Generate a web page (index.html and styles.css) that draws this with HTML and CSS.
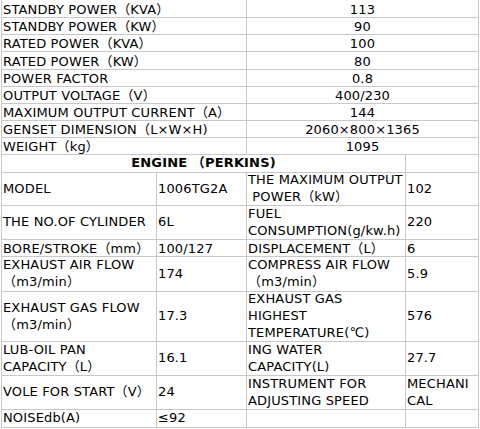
FILE: index.html
```html
<!DOCTYPE html>
<html>
<head>
<meta charset="utf-8">
<link rel="stylesheet" href="styles.css">
</head>
<body>
<div class="sheet">
  <div class="c lbl lo">STANDBY POWER（KVA）</div><div class="c val lo">113</div>
  <div class="c lbl lo">STANDBY POWER（KW）</div><div class="c val lo">90</div>
  <div class="c lbl lo">RATED POWER（KVA）</div><div class="c val lo">100</div>
  <div class="c lbl lo">RATED POWER（KW）</div><div class="c val lo">80</div>
  <div class="c lbl lo">POWER FACTOR</div><div class="c val lo">0.8</div>
  <div class="c lbl lo">OUTPUT VOLTAGE（V）</div><div class="c val lo">400/230</div>
  <div class="c lbl lo">MAXIMUM OUTPUT CURRENT（A）</div><div class="c val lo">144</div>
  <div class="c lbl lo">GENSET DIMENSION（L×W×H)</div><div class="c val lo">2060×800×1365</div>
  <div class="c lbl lo">WEIGHT（kg）</div><div class="c val lo">1095</div>

  <div class="c head">ENGINE （PERKINS)</div><div class="c"></div>

  <div class="c">MODEL</div><div class="c">1006TG2A</div><div class="c">THE MAXIMUM OUTPUT<br>&nbsp;POWER（kW）</div><div class="c">102</div>
  <div class="c">THE NO.OF CYLINDER</div><div class="c">6L</div><div class="c">FUEL<br>CONSUMPTION(g/kw.h)</div><div class="c">220</div>
  <div class="c lo">BORE/STROKE（mm）</div><div class="c lo">100/127</div><div class="c lo">DISPLACEMENT（L）</div><div class="c lo">6</div>
  <div class="c">EXHAUST AIR FLOW<br>（m3/min）</div><div class="c">174</div><div class="c">COMPRESS AIR FLOW<br>（m3/min）</div><div class="c">5.9</div>
  <div class="c">EXHAUST GAS FLOW<br>（m3/min）</div><div class="c">17.3</div><div class="c">EXHAUST GAS<br>HIGHEST<br>TEMPERATURE(℃)</div><div class="c">576</div>
  <div class="c">LUB-OIL PAN<br>CAPACITY（L）</div><div class="c">16.1</div><div class="c">ING WATER<br>CAPACITY(L)</div><div class="c">27.7</div>
  <div class="c">VOLE FOR START（V）</div><div class="c">24</div><div class="c">INSTRUMENT FOR<br>ADJUSTING SPEED</div><div class="c">MECHANI<br>CAL</div>
  <div class="c">NOISEdb(A)</div><div class="c">≤92</div><div class="c"></div><div class="c"></div>
</div>
</body>
</html>
```
FILE: styles.css
```css
html, body {
  margin: 0;
  padding: 0;
  background: #fff;
}
body {
  font-family: "DejaVu Sans", "Noto Sans CJK SC", sans-serif;
  font-size: 13px;
  letter-spacing: 0.15px;
  color: #000;
}
.sheet {
  margin-left: 1px;
  width: 476px;
  display: grid;
  grid-template-columns: 154px 89px 158px 72px;
  grid-template-rows: 17px 16px 16px 17px 16px 16px 16px 16px 16px 17px 32px 33px 16px 34px 49px 33px 33px 17px;
  gap: 1px;
  padding: 0 1px 1px 1px;
  background: #c8c8c8;
}
.c {
  background: #fff;
  display: flex;
  flex-direction: column;
  justify-content: center;
  padding-left: 1px;
  line-height: 16.7px;
  white-space: nowrap;
  overflow: visible;
}
.lo {
  padding-top: 3px;
}
.lbl {
  grid-column: span 2;
}
.val {
  grid-column: span 2;
  align-items: center;
  padding-left: 0;
}
.head {
  grid-column: span 3;
  align-items: center;
  font-weight: bold;
  padding-left: 0;
}
```
